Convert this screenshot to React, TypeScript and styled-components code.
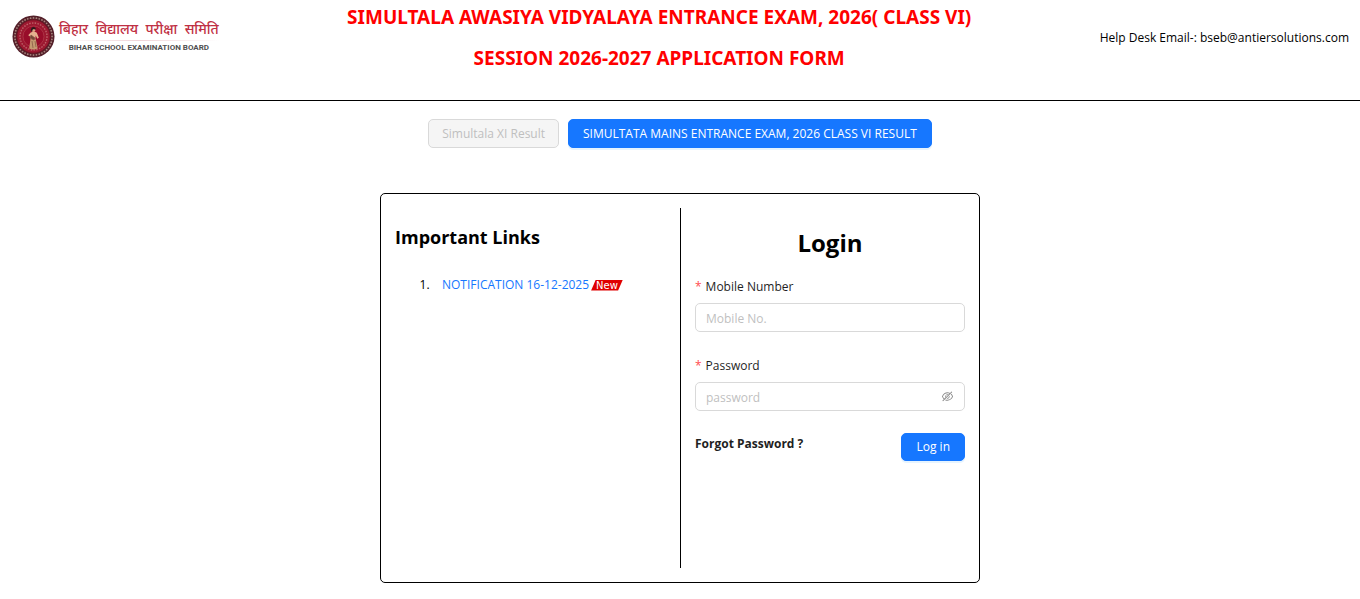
import React, { useState } from "react";
import styled, { createGlobalStyle } from "styled-components";
import { AiOutlineEye, AiOutlineEyeInvisible } from "react-icons/ai";

const GlobalStyle = createGlobalStyle`
  *, *::before, *::after { box-sizing: border-box; }
  body {
    margin: 0;
    background: #fff;
    color: #000;
    font-family: "Segoe UI", "Open Sans", "Noto Sans", sans-serif;
    font-size: 12px;
    line-height: 20px;
  }
  button, input { font: inherit; }
`;

const Header = styled.header`
  display: flex;
  justify-content: space-between;
  align-items: flex-start;
  padding: 5px 11px 30px 12px;
  border-bottom: 1px solid #000;
`;

const Logo = styled.div`
  display: flex;
  align-items: center;
  gap: 4px;
  padding-top: 10px;
`;

const LogoText = styled.div`
  display: flex;
  flex-direction: column;
  align-items: center;
  padding-top: 4px;
`;

const HindiName = styled.span`
  color: #bf3044;
  font-family: "Noto Sans Devanagari", "Noto Sans", sans-serif;
  font-size: 14px;
  font-weight: 500;
  line-height: 18px;
  white-space: pre;
`;

const LogoRule = styled.span`
  width: 100%;
  height: 1px;
  background: linear-gradient(90deg, #fff, #f0d4d8, #fff);
`;

const EnglishName = styled.span`
  color: #505050;
  font-family: Roboto, sans-serif;
  font-size: 8px;
  font-weight: 700;
  line-height: 14px;
  white-space: nowrap;
`;

const Titles = styled.div`
  display: flex;
  flex-direction: column;
  gap: 17px;
  text-align: center;
`;

const Title = styled.h1`
  margin: 0;
  color: #f00;
  font-family: "Segoe UI", "Noto Sans", sans-serif;
  font-size: 19px;
  font-weight: 700;
  line-height: 24px;
`;

const HelpDesk = styled.div`
  padding-top: 23px;
  white-space: nowrap;
`;

const Results = styled.nav`
  display: flex;
  justify-content: center;
  gap: 9px;
  padding: 18px 0 45px;
`;

const Button = styled.button<{ $primary?: boolean }>`
  height: 29px;
  padding: 0 ${(p) => (p.$primary ? "14px" : "13px")};
  border: 1px solid ${(p) => (p.$primary ? "#1677ff" : "#d9d9d9")};
  border-radius: 5px;
  background: ${(p) => (p.$primary ? "#1677ff" : "#f5f5f5")};
  color: ${(p) => (p.$primary ? "#fff" : "#bfbfbf")};
  box-shadow: ${(p) => (p.$primary ? "0 2px 0 rgba(5, 145, 255, 0.1)" : "none")};
  cursor: ${(p) => (p.$primary ? "pointer" : "not-allowed")};
`;

const SubmitButton = styled(Button)`
  height: 28px;
`;

const Card = styled.main`
  display: grid;
  grid-template-columns: 1fr 1fr;
  max-width: 600px;
  min-height: 390px;
  margin: 0 auto 16px;
  padding: 14px 0;
  border: 1px solid #000;
  border-radius: 5px;
`;

const Links = styled.section`
  padding: 17px 14px;
`;

const LinksTitle = styled.h2`
  margin: 0 0 26px;
  font-size: 18px;
  font-weight: 700;
  line-height: 24px;
`;

const LinkList = styled.ol`
  margin: 0;
  padding-left: 47px;

  li::marker { content: "1.\\00a0\\00a0\\00a0\\00a0"; }
`;

const LinkRow = styled.span`
  display: inline-flex;
  align-items: center;
  gap: 2px;
`;

const Anchor = styled.a`
  color: #1677ff;
  text-decoration: none;
`;

const NewBadge = styled.span`
  padding: 0 5px;
  background: #e00000;
  clip-path: polygon(15% 0, 100% 0, 85% 100%, 0 100%);
  color: #fff;
  font-family: "DejaVu Sans", sans-serif;
  font-size: 10px;
  line-height: 11px;
`;

const Login = styled.section`
  padding: 18px 14px 0;
  border-left: 1px solid #000;
`;

const LoginTitle = styled.h2`
  margin: 0 0 17px;
  font-size: 24px;
  line-height: 34px;
  text-align: center;
`;

const Field = styled.div`
  display: flex;
  flex-direction: column;
  gap: 6px;

  & + & { margin-top: 24px; }
`;

const Label = styled.label`
  display: flex;
  gap: 4px;
  color: #1f1f1f;

  &::before {
    content: "*";
    color: #ff4d4f;
  }
`;

const InputBox = styled.div`
  display: flex;
  align-items: center;
  height: 29px;
  padding: 0 10px;
  border: 1px solid #d9d9d9;
  border-radius: 5px;
`;

const Input = styled.input`
  flex: 1;
  min-width: 0;
  padding: 2px 0 0;
  border: 0;
  outline: 0;
  background: none;

  &::placeholder { color: #bfbfbf; }
`;

const EyeButton = styled.button`
  display: flex;
  padding: 0;
  border: 0;
  background: none;
  color: #8c8c8c;
  font-size: 13px;
  cursor: pointer;
`;

const Actions = styled.div`
  display: flex;
  justify-content: space-between;
  align-items: flex-start;
  margin-top: 22px;
`;

const Forgot = styled.a`
  color: #1f1f1f;
  font-weight: 700;
  line-height: 22px;
  text-decoration: none;
`;

const beads = Array.from({ length: 40 }, (_, i) => (i * Math.PI) / 20);

function Emblem() {
  return (
    <svg width="43" height="43" viewBox="0 0 43 43" role="img" aria-label="Bihar School Examination Board emblem">
      <circle cx="21.5" cy="21.5" r="21" fill="#54202a" />
      {beads.map((a) => (
        <circle
          key={a}
          cx={21.5 + 18.6 * Math.cos(a)}
          cy={21.5 + 18.6 * Math.sin(a)}
          r="0.9"
          fill="#a7847c"
        />
      ))}
      <circle cx="21.5" cy="21.5" r="16.7" fill="#9c1830" stroke="#6b1522" />
      <circle cx="21.5" cy="21.5" r="13.5" fill="none" stroke="#bd6268" strokeWidth="1.4" strokeDasharray="1.5 1.3" />
      <circle cx="21.5" cy="21.5" r="10.5" fill="#980d2a" stroke="#b94652" strokeWidth="0.6" />
      <path d="M18.7 17.5c2-1 4.5-1 6.1.3l2 5-1.4 1-1.7-3.4-.4 4.2h-4.7l-.5-3-1.9-1.3z" fill="#e5b18f" />
      <path d="M18.4 24.2h5.4l1.9 9.2c-2.4 1.3-6.2 1.3-8.5 0z" fill="#c49a70" />
      <path d="M19 20l4 3-1 2-4-2zM20 26l1 7M23 26l1 6" fill="#76483a" stroke="#805541" strokeWidth="0.7" />
      <circle cx="21.4" cy="14.9" r="2.1" fill="#dfa785" />
      <path d="M18.9 15.2c-.4-4 4.8-4.5 5.1-.8-1.8.5-2.8-.8-3.3.4l-.8 2.1z" fill="#29191a" />
    </svg>
  );
}

export default function App() {
  const [visible, setVisible] = useState(false);
  return (
    <>
      <GlobalStyle />
      <Header>
        <Logo>
          <Emblem />
          <LogoText>
            <HindiName lang="hi">{"बिहार  विद्यालय  परीक्षा  समिति"}</HindiName>
            <LogoRule />
            <EnglishName>BIHAR SCHOOL EXAMINATION BOARD</EnglishName>
          </LogoText>
        </Logo>
        <Titles>
          <Title>SIMULTALA AWASIYA VIDYALAYA ENTRANCE EXAM, 2026( CLASS VI)</Title>
          <Title as="h2">SESSION 2026-2027 APPLICATION FORM</Title>
        </Titles>
        <HelpDesk>Help Desk Email-: bseb@antiersolutions.com</HelpDesk>
      </Header>
      <Results>
        <Button type="button" disabled>Simultala XI Result</Button>
        <Button type="button" $primary>SIMULTATA MAINS ENTRANCE EXAM, 2026 CLASS VI RESULT</Button>
      </Results>
      <Card>
        <Links>
          <LinksTitle>Important Links</LinksTitle>
          <LinkList>
            <li>
              <LinkRow>
                <Anchor href="#notification">NOTIFICATION 16-12-2025</Anchor>
                <NewBadge>New</NewBadge>
              </LinkRow>
            </li>
          </LinkList>
        </Links>
        <Login>
          <LoginTitle>Login</LoginTitle>
          <form onSubmit={(e) => e.preventDefault()}>
            <Field>
              <Label htmlFor="mobile">Mobile Number</Label>
              <InputBox>
                <Input id="mobile" type="tel" placeholder="Mobile No." />
              </InputBox>
            </Field>
            <Field>
              <Label htmlFor="password">Password</Label>
              <InputBox>
                <Input id="password" type={visible ? "text" : "password"} placeholder="password" />
                <EyeButton type="button" aria-label="Toggle password visibility" onClick={() => setVisible(!visible)}>
                  {visible ? <AiOutlineEye /> : <AiOutlineEyeInvisible />}
                </EyeButton>
              </InputBox>
            </Field>
            <Actions>
              <Forgot href="#forgot">Forgot Password ?</Forgot>
              <SubmitButton type="submit" $primary>Log in</SubmitButton>
            </Actions>
          </form>
        </Login>
      </Card>
    </>
  );
}
